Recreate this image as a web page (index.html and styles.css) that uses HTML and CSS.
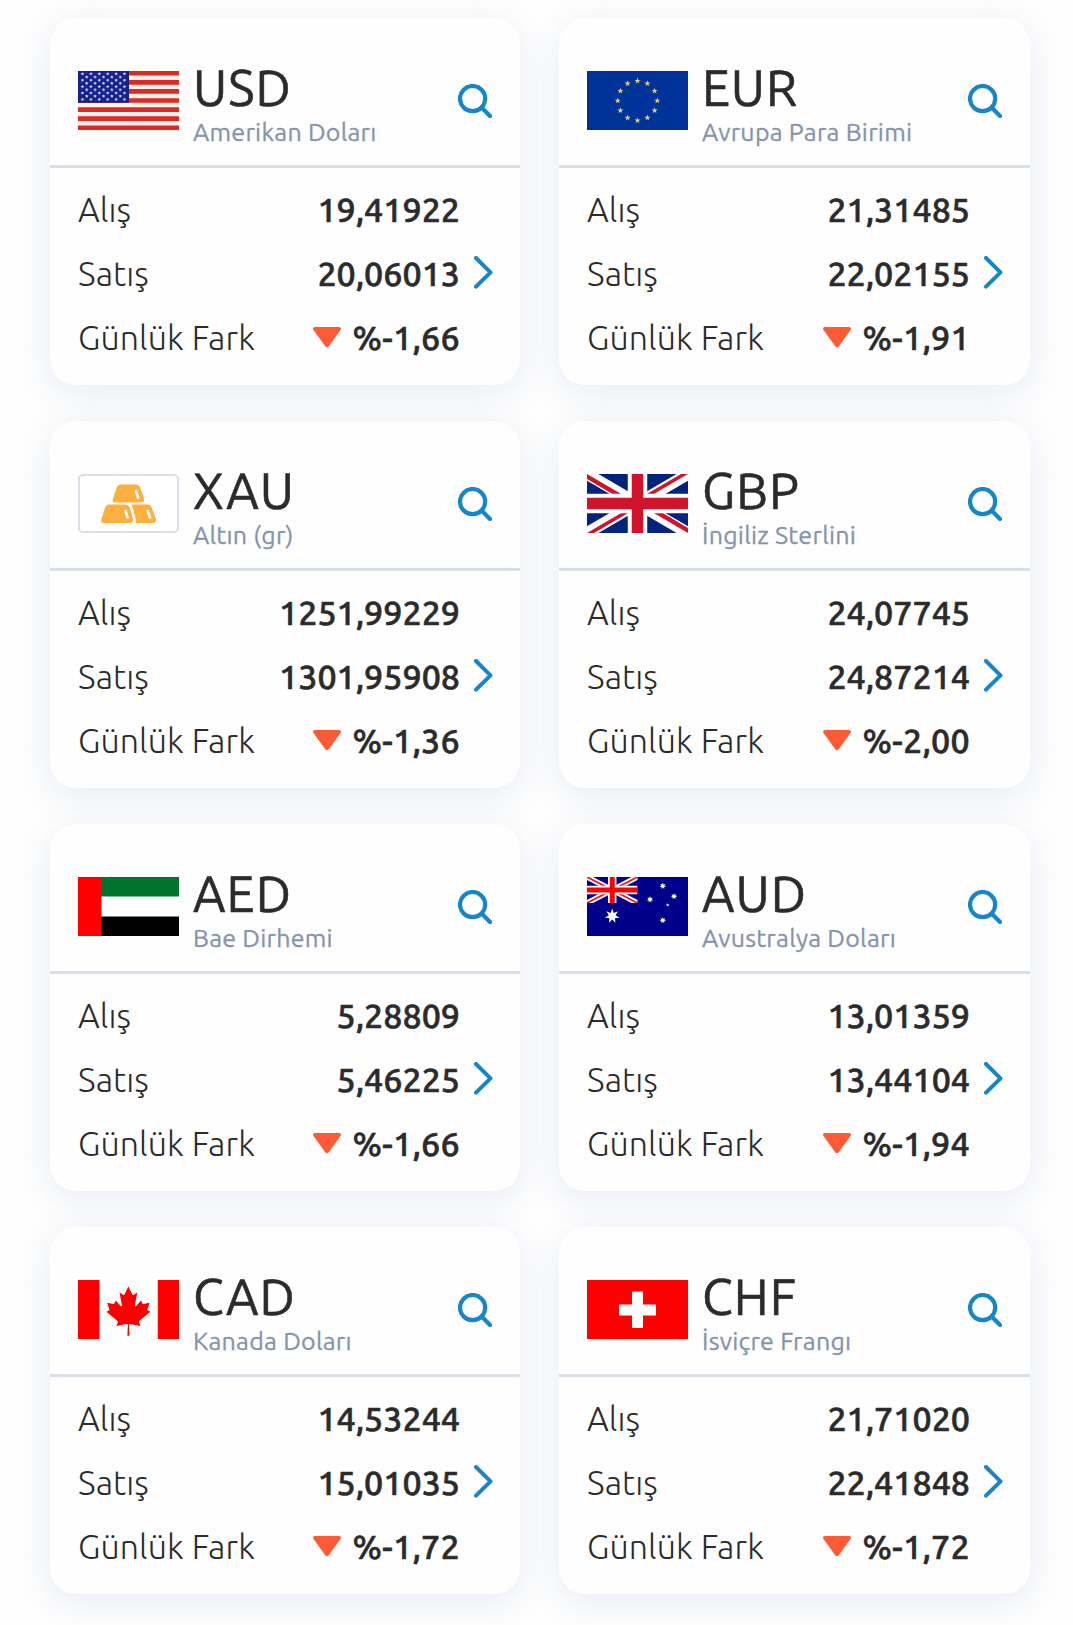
FILE: index.html
```html
<!DOCTYPE html>
<html lang="tr">
<head>
  <meta charset="UTF-8">
  <title>Döviz Kurları</title>
  <link rel="stylesheet" href="styles.css">
</head>
<body>
  <!-- Shared shapes -->
  <svg class="defs" width="0" height="0">
    <defs>
      <symbol id="search" viewBox="0 0 34 34">
        <circle cx="14.6" cy="14.6" r="12.6"/>
        <path d="M23.6 23.6L32 32"/>
      </symbol>
      <symbol id="chevron" viewBox="0 0 19 33">
        <path d="M2 2L16.5 16.3L2 30.6"/>
      </symbol>
      <symbol id="down" viewBox="0 0 28 21">
        <path d="M2 0H26Q29 .6 27.5 3L16 19Q14 21.5 12 19L.5 3Q-1 .6 2 0Z"/>
      </symbol>
      <path id="star" d="M0-1L.2245-.309H.951L.363.118L.588.809L0 .382L-.588.809L-.363.118L-.951-.309H-.2245Z"/>
      <path id="star7" d="M0-1L.2-.415L.782-.623L.449-.102L.975.223L.36.288L.434.901L0 .46L-.434.901L-.36.288L-.975.223L-.449-.102L-.782-.623L-.2-.415Z"/>
      <pattern id="usStars" x="2.4" y="1.2" width="8.4" height="6.4" patternUnits="userSpaceOnUse">
        <use href="#star" transform="translate(2.1 1.6) scale(1.9)" fill="#fff"/>
        <use href="#star" transform="translate(6.3 4.8) scale(1.9)" fill="#fff"/>
      </pattern>
    </defs>
  </svg>

  <main class="rates">

    <!-- USD -->
    <section class="card">
      <header class="card-head">
        <svg class="flag" viewBox="0 0 101 59" preserveAspectRatio="none">
          <rect width="101" height="59" fill="#fff1ee"/>
          <path d="M0 2.3H101M0 11.35H101M0 20.4H101M0 29.5H101M0 38.6H101M0 47.65H101M0 56.7H101" stroke="#dc2a25" stroke-width="4.6"/>
          <rect width="51" height="31.8" fill="#14218c"/>
          <rect x="2.4" y="1.2" width="46.2" height="28.8" fill="url(#usStars)"/>
        </svg>
        <div class="currency">
          <h2 class="code">USD</h2>
          <p class="name">Amerikan Doları</p>
        </div>
        <svg class="search"><use href="#search"/></svg>
      </header>
      <div class="card-body">
        <div class="rows">
          <div class="row"><span class="label">Alış</span><span class="value">19,41922</span></div>
          <div class="row"><span class="label">Satış</span><span class="value">20,06013</span></div>
          <div class="row"><span class="label">Günlük Fark</span><span class="value change"><svg class="down"><use href="#down"/></svg>%-1,66</span></div>
        </div>
        <svg class="chevron"><use href="#chevron"/></svg>
      </div>
    </section>

    <!-- EUR -->
    <section class="card">
      <header class="card-head">
        <svg class="flag" viewBox="0 0 101 59" preserveAspectRatio="none">
          <rect width="101" height="59" fill="#003399"/>
          <g fill="#e0d36c">
            <use href="#star" transform="translate(50.5 9.9) scale(3.3)"/>
            <use href="#star" transform="translate(60.4 12.6) scale(3.3)"/>
            <use href="#star" transform="translate(67.6 19.9) scale(3.3)"/>
            <use href="#star" transform="translate(70.3 29.7) scale(3.3)"/>
            <use href="#star" transform="translate(67.6 39.6) scale(3.3)"/>
            <use href="#star" transform="translate(60.4 46.8) scale(3.3)"/>
            <use href="#star" transform="translate(50.5 49.5) scale(3.3)"/>
            <use href="#star" transform="translate(40.6 46.8) scale(3.3)"/>
            <use href="#star" transform="translate(33.4 39.6) scale(3.3)"/>
            <use href="#star" transform="translate(30.7 29.7) scale(3.3)"/>
            <use href="#star" transform="translate(33.4 19.9) scale(3.3)"/>
            <use href="#star" transform="translate(40.6 12.6) scale(3.3)"/>
          </g>
        </svg>
        <div class="currency">
          <h2 class="code">EUR</h2>
          <p class="name">Avrupa Para Birimi</p>
        </div>
        <svg class="search"><use href="#search"/></svg>
      </header>
      <div class="card-body">
        <div class="rows">
          <div class="row"><span class="label">Alış</span><span class="value">21,31485</span></div>
          <div class="row"><span class="label">Satış</span><span class="value">22,02155</span></div>
          <div class="row"><span class="label">Günlük Fark</span><span class="value change"><svg class="down"><use href="#down"/></svg>%-1,91</span></div>
        </div>
        <svg class="chevron"><use href="#chevron"/></svg>
      </div>
    </section>

    <!-- XAU -->
    <section class="card">
      <header class="card-head">
        <svg class="flag" viewBox="0 0 101 59" preserveAspectRatio="none">
          <rect x="1" y="1" width="99" height="57" rx="4" fill="#fff" stroke="#d8dfe9" stroke-width="2"/>
          <g fill="#fbb040">
            <path d="M43 10.5H57.5Q61 10.5 62.2 13.5L66 25Q66.8 28.5 63.5 28.5H37Q34 28.5 34.7 25.5L38.5 14Q39.7 10.5 43 10.5Z"/>
            <path d="M31 30.5H47Q50.5 30.5 51.7 33.5L55 45Q55.5 49 52 49H26Q22.5 49 23.2 45.5L27 34Q28 30.5 31 30.5Z"/>
            <path d="M53 30.5H69Q72.5 30.5 73.6 33.5L78 45Q78.5 49 75 49H57.5Q58.2 46.5 57.5 44L54.6 33.5Q54 31.5 53 30.5Z"/>
          </g>
          <path d="M58 17L60 23.5M47.5 37L49.5 43.5M69.8 37L72 43.5" stroke="#fff" stroke-width="2.6" stroke-linecap="round"/>
        </svg>
        <div class="currency">
          <h2 class="code">XAU</h2>
          <p class="name">Altın (gr)</p>
        </div>
        <svg class="search"><use href="#search"/></svg>
      </header>
      <div class="card-body">
        <div class="rows">
          <div class="row"><span class="label">Alış</span><span class="value">1251,99229</span></div>
          <div class="row"><span class="label">Satış</span><span class="value">1301,95908</span></div>
          <div class="row"><span class="label">Günlük Fark</span><span class="value change"><svg class="down"><use href="#down"/></svg>%-1,36</span></div>
        </div>
        <svg class="chevron"><use href="#chevron"/></svg>
      </div>
    </section>

    <!-- GBP -->
    <section class="card">
      <header class="card-head">
        <svg class="flag" viewBox="0 0 101 59" preserveAspectRatio="none">
          <rect width="101" height="59" fill="#00247d"/>
          <path d="M0 0L101 59M101 0L0 59" stroke="#fff" stroke-width="11.5"/>
          <path d="M0 0L50.5 29.5L47.5 33L0 5ZM101 0L50.5 29.5L46 28L94 0ZM101 59L50.5 29.5L54 26L101 54ZM0 59L50.5 29.5L55 31L7 59Z" fill="#cf142b"/>
          <path d="M50.5 0V59M0 29.5H101" stroke="#fff" stroke-width="19.5"/>
          <path d="M50.5 0V59M0 29.5H101" stroke="#cf142b" stroke-width="11.5"/>
        </svg>
        <div class="currency">
          <h2 class="code">GBP</h2>
          <p class="name">İngiliz Sterlini</p>
        </div>
        <svg class="search"><use href="#search"/></svg>
      </header>
      <div class="card-body">
        <div class="rows">
          <div class="row"><span class="label">Alış</span><span class="value">24,07745</span></div>
          <div class="row"><span class="label">Satış</span><span class="value">24,87214</span></div>
          <div class="row"><span class="label">Günlük Fark</span><span class="value change"><svg class="down"><use href="#down"/></svg>%-2,00</span></div>
        </div>
        <svg class="chevron"><use href="#chevron"/></svg>
      </div>
    </section>

    <!-- AED -->
    <section class="card">
      <header class="card-head">
        <svg class="flag" viewBox="0 0 101 59" preserveAspectRatio="none">
          <rect width="101" height="59" fill="#fff"/>
          <rect width="101" height="19.5" fill="#00732f"/>
          <rect y="39.5" width="101" height="19.5" fill="#000"/>
          <rect width="23.5" height="59" fill="#f00"/>
        </svg>
        <div class="currency">
          <h2 class="code">AED</h2>
          <p class="name">Bae Dirhemi</p>
        </div>
        <svg class="search"><use href="#search"/></svg>
      </header>
      <div class="card-body">
        <div class="rows">
          <div class="row"><span class="label">Alış</span><span class="value">5,28809</span></div>
          <div class="row"><span class="label">Satış</span><span class="value">5,46225</span></div>
          <div class="row"><span class="label">Günlük Fark</span><span class="value change"><svg class="down"><use href="#down"/></svg>%-1,66</span></div>
        </div>
        <svg class="chevron"><use href="#chevron"/></svg>
      </div>
    </section>

    <!-- AUD -->
    <section class="card">
      <header class="card-head">
        <svg class="flag" viewBox="0 0 101 59" preserveAspectRatio="none">
          <rect width="101" height="59" fill="#00008b"/>
          <svg width="50.5" height="26" viewBox="0 0 50.5 26">
            <path d="M0 0L50.5 26M50.5 0L0 26" stroke="#fff" stroke-width="5.5"/>
            <path d="M0 0L50.5 26M50.5 0L0 26" stroke="#f01818" stroke-width="1.8"/>
            <path d="M25.25 0V26M0 13H50.5" stroke="#fff" stroke-width="8.4"/>
            <path d="M25.25 0V26M0 13H50.5" stroke="#f00" stroke-width="5"/>
          </svg>
          <g fill="#fff">
            <use href="#star7" transform="translate(25.2 39) scale(7.5)"/>
            <use href="#star7" transform="translate(75.8 9) scale(3.4)"/>
            <use href="#star7" transform="translate(63 22.5) scale(3.4)"/>
            <use href="#star7" transform="translate(87 19.3) scale(3.4)"/>
            <use href="#star7" transform="translate(75.8 43.3) scale(3.4)"/>
            <use href="#star" transform="translate(80.7 28) scale(2)"/>
          </g>
        </svg>
        <div class="currency">
          <h2 class="code">AUD</h2>
          <p class="name">Avustralya Doları</p>
        </div>
        <svg class="search"><use href="#search"/></svg>
      </header>
      <div class="card-body">
        <div class="rows">
          <div class="row"><span class="label">Alış</span><span class="value">13,01359</span></div>
          <div class="row"><span class="label">Satış</span><span class="value">13,44104</span></div>
          <div class="row"><span class="label">Günlük Fark</span><span class="value change"><svg class="down"><use href="#down"/></svg>%-1,94</span></div>
        </div>
        <svg class="chevron"><use href="#chevron"/></svg>
      </div>
    </section>

    <!-- CAD -->
    <section class="card">
      <header class="card-head">
        <svg class="flag" viewBox="0 0 101 59" preserveAspectRatio="none">
          <rect width="101" height="59" fill="#fff"/>
          <path d="M0 0H21.5V59H0ZM79.8 0H101V59H79.8Z" fill="#f00"/>
          <path transform="translate(50.4 31) scale(.0118 .0122)" fill="#f00" d="m-90 2030 45-863a95 95 0 0 0-111-98l-859 151 116-320a65 65 0 0 0-20-73l-941-762 212-99a65 65 0 0 0 34-79l-186-572 542 115a65 65 0 0 0 73-38l105-247 423 454a65 65 0 0 0 111-57l-204-1052 327 189a65 65 0 0 0 91-27l332-652 332 652a65 65 0 0 0 91 27l327-189-204 1052a65 65 0 0 0 111 57l423-454 105 247a65 65 0 0 0 73 38l542-115-186 572a65 65 0 0 0 34 79l212 99-941 762a65 65 0 0 0-20 73l116 320-859-151a95 95 0 0 0-111 98l45 863z"/>
        </svg>
        <div class="currency">
          <h2 class="code">CAD</h2>
          <p class="name">Kanada Doları</p>
        </div>
        <svg class="search"><use href="#search"/></svg>
      </header>
      <div class="card-body">
        <div class="rows">
          <div class="row"><span class="label">Alış</span><span class="value">14,53244</span></div>
          <div class="row"><span class="label">Satış</span><span class="value">15,01035</span></div>
          <div class="row"><span class="label">Günlük Fark</span><span class="value change"><svg class="down"><use href="#down"/></svg>%-1,72</span></div>
        </div>
        <svg class="chevron"><use href="#chevron"/></svg>
      </div>
    </section>

    <!-- CHF -->
    <section class="card">
      <header class="card-head">
        <svg class="flag" viewBox="0 0 101 59" preserveAspectRatio="none">
          <rect width="101" height="59" fill="#f00"/>
          <path d="M45 11.5H56V24.5H69V35.5H56V48H45V35.5H32V24.5H45Z" fill="#fff"/>
        </svg>
        <div class="currency">
          <h2 class="code">CHF</h2>
          <p class="name">İsviçre Frangı</p>
        </div>
        <svg class="search"><use href="#search"/></svg>
      </header>
      <div class="card-body">
        <div class="rows">
          <div class="row"><span class="label">Alış</span><span class="value">21,71020</span></div>
          <div class="row"><span class="label">Satış</span><span class="value">22,41848</span></div>
          <div class="row"><span class="label">Günlük Fark</span><span class="value change"><svg class="down"><use href="#down"/></svg>%-1,72</span></div>
        </div>
        <svg class="chevron"><use href="#chevron"/></svg>
      </div>
    </section>

  </main>
</body>
</html>
```
FILE: styles.css
```css
* {
  box-sizing: border-box;
}

body {
  margin: 0;
  background: #fefefe;
  color: #2b2b2b;
  font-family: Ubuntu, "Open Sans", "Noto Sans", sans-serif;
  overflow: hidden;
}

.defs {
  display: block;
}

.rates {
  display: grid;
  grid-template-columns: 470px 471px;
  grid-auto-rows: 367px;
  gap: 36px 39px;
  padding: 18px 0 31px 50px;
}

.card {
  display: flex;
  flex-direction: column;
  background: #fefefe;
  border-radius: 26px;
  box-shadow: 0 8px 36px rgba(50, 80, 160, 0.11);
}

/* Flag, currency name and search button */
.card-head {
  display: flex;
  align-items: flex-start;
  height: 150px;
  padding: 53px 28px 0;
  border-bottom: 3px solid #d9e0ea;
}

.flag {
  width: 101px;
  height: 59px;
  flex: none;
}

.currency {
  flex: 1;
  margin: -9px 0 0 14px;
}

.code {
  margin: 0;
  font-size: 50px;
  font-weight: 400;
  line-height: 50px;
  letter-spacing: 1.1px;
  -webkit-text-stroke: 0.6px;
}

.name {
  margin: 3px 0 0;
  color: #8494ad;
  font-size: 25px;
  line-height: 34px;
  letter-spacing: 0.25px;
  white-space: nowrap;
  -webkit-text-stroke: 0.3px;
}

.search {
  width: 34px;
  height: 34px;
  margin-top: 13px;
  fill: none;
  stroke: #1685c9;
  stroke-width: 4.2;
  stroke-linecap: round;
}

/* Buy, sell and daily change rows */
.card-body {
  display: flex;
  align-items: center;
  flex: 1;
  padding: 0 27px 7px 28px;
}

.rows {
  flex: 1;
}

.row {
  display: flex;
  align-items: center;
  justify-content: space-between;
  height: 64px;
}

.label {
  font-size: 34px;
  font-weight: 300;
  letter-spacing: 0.1px;
}

.value {
  display: flex;
  align-items: center;
  font-size: 34px;
  font-weight: 500;
  -webkit-text-stroke: 0.6px;
}

.change {
  letter-spacing: 0.3px;
}

.down {
  width: 28px;
  height: 21px;
  margin-right: 11px;
  fill: #ff5a36;
}

.chevron {
  width: 19px;
  height: 33px;
  margin: 0 0 2px 14px;
  fill: none;
  stroke: #1685c9;
  stroke-width: 4;
  stroke-linecap: round;
  stroke-linejoin: round;
}
```
